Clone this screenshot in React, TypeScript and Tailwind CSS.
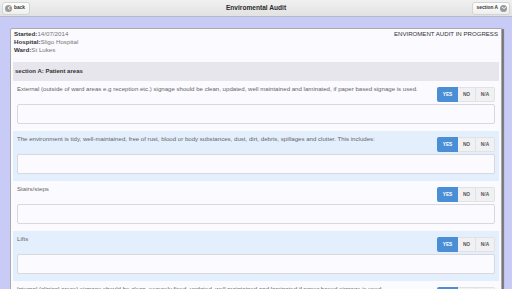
import { ChevronDown, ChevronLeft } from 'lucide-react';

const questions = [
  'External (outside of ward areas e.g reception etc.) signage should be clean, updated, well maintained and laminated, if paper based signage is used.',
  'The environment is tidy, well-maintained, free of rust, blood or body substances, dust, dirt, debris, spillages and clutter. This includes:',
  'Stairs/steps',
  'Lifts',
  'Internal (clinical areas) signage should be clean, securely fixed, updated, well maintained and laminated if paper based signage is used.',
];

function Choice() {
  return (
    <div className="flex h-[15px] shrink-0 overflow-hidden rounded-[2px] text-[4.8px] font-bold">
      <span className="flex w-[21px] items-center justify-center bg-[#4a8fd6] text-white">YES</span>
      <span className="flex w-[17px] items-center justify-center border-y border-[#e2e2e2] bg-[#f1f1f3] text-[#555]">NO</span>
      <span className="flex w-[20px] items-center justify-center border border-[#e2e2e2] bg-[#f1f1f3] text-[#555]">N/A</span>
    </div>
  );
}

export default function App() {
  return (
    <div className="flex h-[289px] w-[512px] flex-col overflow-hidden bg-[#c7cbf6] font-['Liberation_Sans',Arial,sans-serif]">
      {/* Top bar */}
      <div className="relative flex h-[17px] shrink-0 items-center justify-between border-b border-[#b9b9c4] bg-gradient-to-b from-[#f0f0f0] to-[#e2e2e2] px-[2px]">
        <button className="flex h-[13px] items-center gap-[2px] rounded-[3px] border border-[#d4d4d4] bg-gradient-to-b from-white to-[#eeeeee] pl-[2px] pr-[4px] text-[4.8px] font-bold text-[#333]">
          <span className="flex h-[7px] w-[7px] items-center justify-center rounded-full bg-[#9a9a9a]">
            <ChevronLeft className="h-[6px] w-[6px] text-white" strokeWidth={4} />
          </span>
          back
        </button>
        <span className="absolute left-1/2 -translate-x-1/2 text-[6.6px] font-bold text-[#2a2a2a]">Enviromental Audit</span>
        <button className="flex h-[13px] items-center gap-[2px] rounded-[3px] border border-[#d4d4d4] bg-gradient-to-b from-white to-[#eeeeee] pl-[4px] pr-[2px] text-[4.8px] font-bold text-[#333]">
          section A
          <span className="flex h-[7px] w-[7px] items-center justify-center rounded-full bg-[#9a9a9a]">
            <ChevronDown className="h-[6px] w-[6px] text-white" strokeWidth={4} />
          </span>
        </button>
      </div>

      {/* Audit card */}
      <div className="ml-[10px] mt-[11px] w-[492px] flex-1 rounded-tl-[2px] border border-[#aaa] bg-[#fafaff] px-[2px] shadow-[2px_1px_1px_#777]">
        <div className="flex h-[33px] justify-between px-[1px] pt-[1px] text-[6.2px] leading-[8px]">
          <div>
            <div><b className="text-[#333]">Started:</b><span className="text-[#777]">14/07/2014</span></div>
            <div><b className="text-[#333]">Hospital:</b><span className="text-[#777]">Sligo Hospital</span></div>
            <div><b className="text-[#333]">Ward:</b><span className="text-[#777]">St Lukes</span></div>
          </div>
          <div className="text-[6.1px] text-[#333]">ENVIROMENT AUDIT IN PROGRESS</div>
        </div>

        <div className="flex h-[19px] items-center bg-[#e6e6ec] px-[2px] text-[6px] font-bold text-[#333]">
          section A: Patient areas
        </div>

        {questions.map((q, i) => (
          <div key={i} className={`flex h-[50px] flex-col gap-[2px] px-[4px] pt-[6px] ${i % 2 === 1 ? 'bg-[#e3effd]' : 'bg-[#fafaff]'}`}>
            <div className="flex items-start justify-between gap-2">
              <p className="-mt-[2px] text-[6.1px] leading-[7px] text-[#666]">{q}</p>
              <Choice />
            </div>
            <div className="h-[20px] w-full rounded-[2px] border border-[#d8d8de] bg-[#fafaff]" />
          </div>
        ))}
      </div>
    </div>
  );
}
